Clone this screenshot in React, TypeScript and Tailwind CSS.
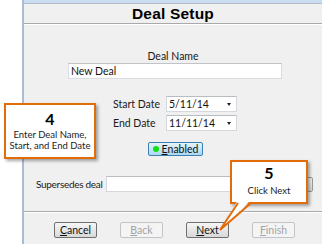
import React from 'react';

const ui = { fontFamily: 'Lato, "Liberation Sans", Arial, sans-serif' };
const title = { fontFamily: '"Liberation Sans", Arial, sans-serif' };
const note = { fontFamily: 'Lato, "Liberation Sans", sans-serif' };

function Acc({ k, rest }: { k: string; rest: string }) {
  return (
    <>
      <span className="underline underline-offset-1">{k}</span>
      {rest}
    </>
  );
}

function WinButton({ k, rest, disabled }: { k: string; rest: string; disabled?: boolean }) {
  return (
    <button
      className={
        disabled
          ? 'h-[16px] w-[43px] rounded-[2px] border border-[#c2c5c8] bg-[#f4f4f4] text-[10.5px] leading-none text-[#a3a3a3]'
          : 'h-[16px] w-[43px] rounded-[2px] border border-[#707070] bg-gradient-to-b from-[#f6f6f6] to-[#d9d9d9] text-[10.5px] leading-none text-[#111]'
      }
    >
      <Acc k={k} rest={rest} />
    </button>
  );
}

function Combo({ value }: { value: string }) {
  return (
    <div className="flex h-[16px] w-[71px] items-center border border-[#d5d8dc] border-t-[#b9bcc1] bg-white pl-[2px] pr-[5px]">
      <span className="flex-1 text-[10.5px] leading-none text-[#111]">{value}</span>
      <span className="h-0 w-0 border-x-[2.5px] border-t-[3px] border-x-transparent border-t-[#222]" />
    </div>
  );
}

export default function App() {
  return (
    <div className="relative flex h-[244px] w-[322px] overflow-hidden bg-white" style={ui}>
      <div className="w-[22px] shrink-0 bg-white" />
      <div className="w-[2px] shrink-0 bg-[#a8bcd6]" />
      <div className="flex flex-1 flex-col bg-[#f0f0f0]">
        <div className="h-[3px] bg-[#c9dcf2]" />
        <div className="h-[1px] bg-[#b4bcc6]" />
        <div
          className="flex h-[19px] items-center justify-center text-[15.5px] font-bold tracking-[0.2px] text-black"
          style={title}
        >
          Deal Setup
        </div>
        <div className="h-[1px] bg-[#a9a9a9]" />
        <div className="h-[1px] bg-white" />

        <div className="mt-[25px] flex justify-center">
          <span className="text-[10.5px] leading-[13px] text-[#1a1a1a]">Deal Name</span>
        </div>
        <div className="ml-[44px] flex h-[16px] w-[214px] items-center border border-[#d9dce0] border-t-[#c0c3c8] bg-white pl-[2px] text-[10.5px] leading-none text-[#111]">
          New Deal
        </div>

        <div className="ml-[89px] mt-[17px] flex items-center">
          <span className="w-[53px] text-[10.5px] leading-none text-[#1a1a1a]">Start Date</span>
          <Combo value="5/11/14" />
        </div>
        <div className="ml-[89px] mt-[3px] flex items-center">
          <span className="w-[53px] text-[10.5px] leading-none text-[#1a1a1a]">End Date</span>
          <Combo value="11/11/14" />
        </div>

        <div className="ml-[124px] mt-[11px] flex h-[14px] w-[55px] items-center justify-center gap-[3px] rounded-[2px] border border-[#3c7fb1] bg-gradient-to-b from-[#e3f3fc] to-[#a9d8f3] text-[10.5px] leading-none text-[#111]">
          <span className="h-[6px] w-[6px] rounded-full bg-[#12e012]" />
          <span>
            <Acc k="E" rest="nabled" />
          </span>
        </div>

        <div className="ml-[12px] mt-[20px] flex w-[277px] items-center gap-[3px]">
          <span className="whitespace-nowrap text-[10px] leading-none tracking-[-0.3px] text-[#1a1a1a]">
            Supersedes deal
          </span>
          <div className="h-[16px] flex-1 border border-[#d5d8dc] border-t-[#b9bcc1] bg-white" />
          <div className="h-[15px] w-[23px] rounded-[2px] border border-[#9a9a9a] bg-gradient-to-b from-[#f6f6f6] to-[#dcdcdc]" />
        </div>

        <div className="mt-[19px] h-[1px] bg-[#a9a9a9]" />
        <div className="h-[1px] bg-white" />

        <div className="ml-[30px] mt-[9px] flex gap-[23px]">
          <WinButton k="C" rest="ancel" />
          <WinButton k="B" rest="ack" disabled />
          <WinButton k="N" rest="ext" />
          <WinButton k="F" rest="inish" disabled />
        </div>
      </div>

      <div
        className="absolute left-[4px] top-[103px] flex h-[56px] w-[92px] flex-col items-center border-2 border-[#e36c0a] bg-white pt-[5px] shadow-[2px_2px_3px_rgba(0,0,0,0.35)]"
        style={note}
      >
        <span className="text-[16px] font-bold leading-[18px] text-black">4</span>
        <span className="mt-[1px] text-[9.5px] leading-[11px] text-[#222]">Enter Deal Name,</span>
        <span className="text-[9.5px] leading-[11px] text-[#222]">Start, and End Date</span>
      </div>

      <div
        className="absolute left-[230px] top-[160px] flex h-[44px] w-[78px] flex-col items-center border-2 border-[#e36c0a] bg-white pt-[2px] shadow-[2px_2px_3px_rgba(0,0,0,0.35)]"
        style={note}
      >
        <span className="text-[16px] font-bold leading-[18px] text-black">5</span>
        <span className="mt-[3px] text-[9.5px] leading-[11px] text-[#222]">Click Next</span>
      </div>
      <svg className="absolute left-[214px] top-[198px]" width="42" height="36" viewBox="0 0 42 36">
        <polygon points="24,2 37,2 6,32" fill="white" />
        <polyline points="24,5 6,32 37,5" fill="none" stroke="#e36c0a" strokeWidth="2" strokeLinejoin="miter" />
      </svg>
    </div>
  );
}
